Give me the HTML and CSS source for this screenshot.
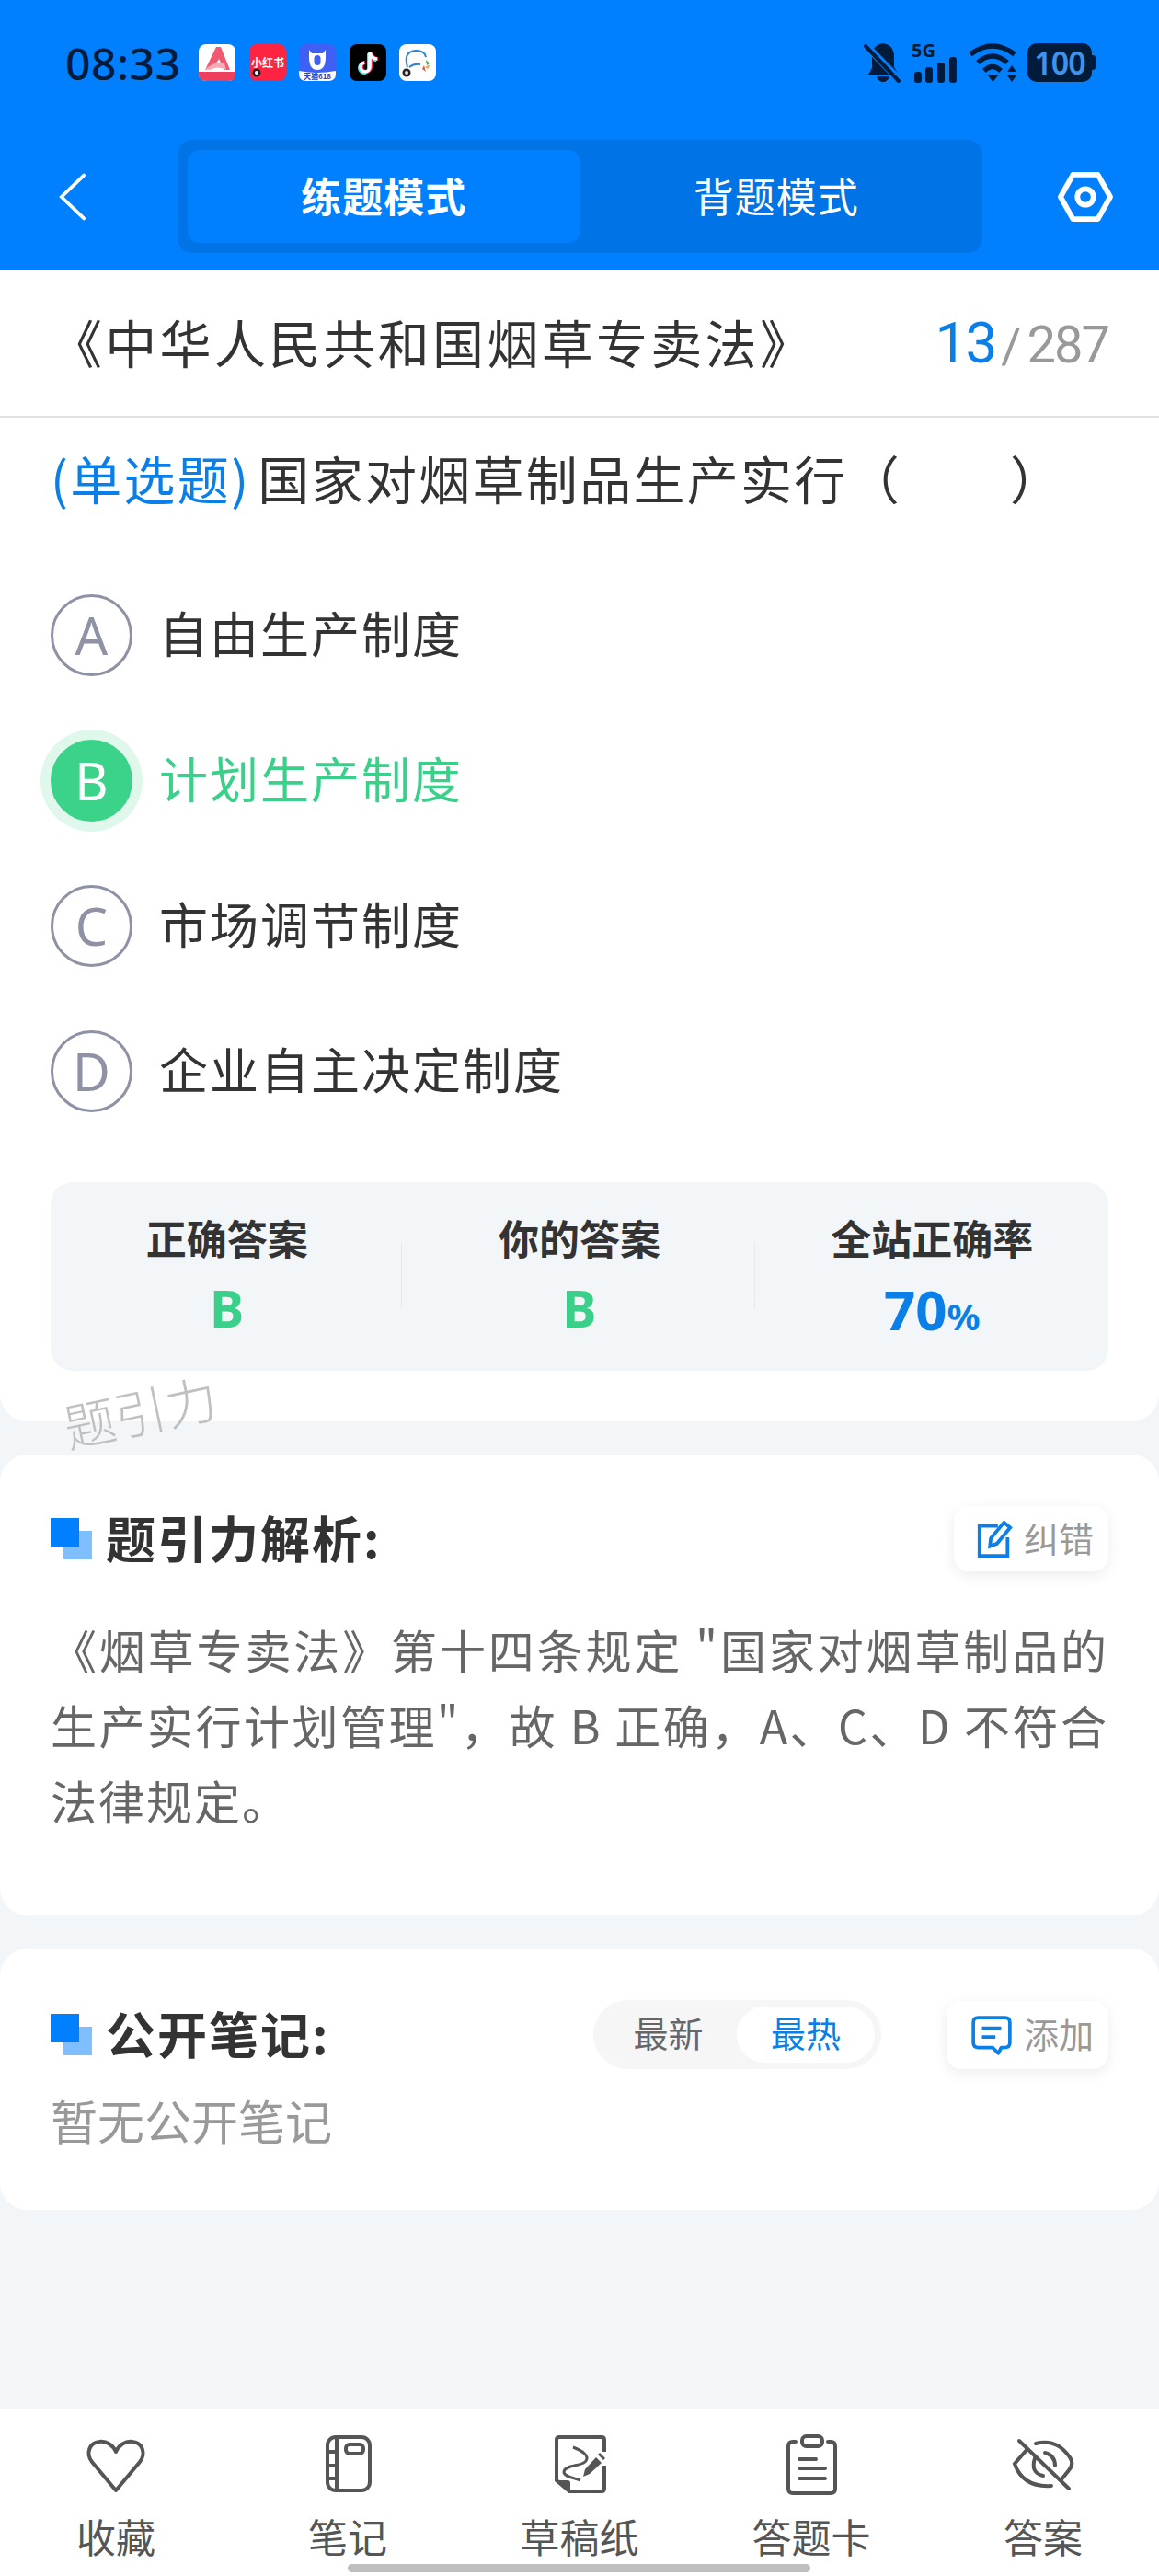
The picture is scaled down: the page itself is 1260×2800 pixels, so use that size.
FILE: index.html

```html
<!DOCTYPE html>
<html lang="zh-CN">
<head>
<meta charset="UTF-8">
<meta name="viewport" content="width=device-width, initial-scale=1.0">
<title>练题模式</title>
<link rel="stylesheet" href="styles.css">
</head>
<body>

<div class="page">

  <div class="header">
    <div class="status-bar">
      <span class="time">08:33</span>
      <div class="app-icons">
        <svg class="app" viewBox="0 0 40 40"><rect width="40" height="40" rx="8" fill="#fff"/><path d="M0 30H40V32Q40 40 32 40H8Q0 40 0 32Z" fill="#ee3f5c"/><path d="M7 28 19 3 24 3 34 28 28 28 22 16 17 24Q12 25 7 28Z" fill="#f0596f"/><path d="M7 28Q16 18 28 21L30 28Q20 23 12 28Z" fill="#f9a9b4"/></svg>
        <svg class="app" viewBox="0 0 40 40"><rect width="40" height="40" rx="8" fill="#ff2442"/><text x="20" y="25" class="app-text" fill="#fff" font-size="12">小红书</text><circle cx="8" cy="31" r="4.5" fill="#222"/><circle cx="8" cy="31" r="2" fill="#fff"/></svg>
        <svg class="app" viewBox="0 0 40 40"><rect width="40" height="40" rx="8" fill="#3f5ff5"/><path d="M0 29Q20 33 40 29V32Q40 40 32 40H8Q0 40 0 32Z" fill="#fff"/><path d="M11 6 14 10H26L29 6V14Q29 28 20 28Q11 28 11 14Z" fill="#fff"/><rect x="16.500" y="12" width="7" height="11" rx="3.500" fill="#3f5ff5"/><text x="20" y="38" class="app-text" fill="#2346c8" font-size="8">天猫618</text></svg>
        <svg class="app" viewBox="0 0 40 40"><rect width="40" height="40" rx="8" fill="#000"/><path d="M22 9V25A5 5 0 1 1 16 20M22 9Q24 16 30 16" fill="none" stroke="#25f4ee" stroke-width="4" transform="translate(-1 1)"/><path d="M22 9V25A5 5 0 1 1 16 20M22 9Q24 16 30 16" fill="none" stroke="#fe2c55" stroke-width="4" transform="translate(1 0)"/><path d="M22 9V25A5 5 0 1 1 16 20M22 9Q24 16 30 16" fill="none" stroke="#fff" stroke-width="3.500"/></svg>
        <svg class="app" viewBox="0 0 40 40"><rect width="40" height="40" rx="8" fill="#fff"/><path d="M9 25Q4 8 18 7Q28 7 29 14M11 25Q16 21 23 22" fill="none" stroke="#2f7fd8" stroke-width="2"/><circle cx="8" cy="31" r="4.500" fill="#222"/><circle cx="8" cy="31" r="2" fill="#ddd"/><path d="M29 17 33 21 30 23Z" fill="#3aa655"/><path d="M34 22 31 27 28 25Z" fill="#f2a33a"/><path d="M27 23 25 27 29 30Z" fill="#e8574a"/></svg>
      </div>
      <div class="status-right">
        <svg class="st-bell" viewBox="0 0 42 44"><path d="M21 1Q31 2 33 13V27L38 35H5L9 28V13Q11 2 21 1Z" fill="#001c3a"/><path d="M14 37H28Q26 43 21 43Q16 43 14 37Z" fill="#001c3a"/><path d="M3 4 39 41" stroke="#0080ff" stroke-width="8"/><path d="M2 4 38 42" stroke="#001c3a" stroke-width="4" stroke-linecap="round"/></svg>
        <div class="st-signal">
          <span class="st-5g">5G</span>
          <svg class="st-bars" viewBox="0 0 50 28"><rect x="3" y="16" width="8" height="12" rx="3" fill="#001c3a"/><rect x="15" y="11" width="8" height="17" rx="3" fill="#001c3a"/><rect x="28" y="6" width="8" height="22" rx="3" fill="#001c3a"/><rect x="41" y="0" width="8" height="28" rx="3" fill="#001c3a"/></svg>
        </div>
        <svg class="st-wifi" viewBox="0 0 54 44"><g fill="none" stroke="#001c3a" stroke-width="5.500"><path d="M2 13Q26 -5 50 13"/><path d="M10 22Q26 8 42 22"/><path d="M17 31Q26 22 35 31"/></g><path d="M21 36H32L26.500 43Z" fill="#001c3a"/><path d="M47 25 52 32H42Z" fill="#001c3a"/><path d="M47 43 52 36H42Z" fill="#001c3a"/></svg>
        <div class="battery"><span class="battery-num">100</span></div>
      </div>
    </div>
    <div class="nav">
      <svg class="nav-back" viewBox="0 0 32 56"><path d="M29 3 3 28 29 53" fill="none" stroke="#fff" stroke-width="4" stroke-linecap="round"/></svg>
      <div class="mode-switch">
        <div class="mode active">练题模式</div>
        <div class="mode">背题模式</div>
      </div>
      <svg class="nav-gear" viewBox="0 0 64 58"><path d="M18 4H46L60 29 46 54H18L4 29Z" fill="none" stroke="#fff" stroke-width="6" stroke-linejoin="round"/><circle cx="32" cy="29" r="9" fill="none" stroke="#fff" stroke-width="6"/></svg>
    </div>
  </div>

  <div class="card question-card">
    <div class="title-row">
      <div class="law-title">《中华人民共和国烟草专卖法》</div>
      <div class="counter"><span class="counter-now">13</span><span class="counter-sep">/</span><span class="counter-total">287</span></div>
    </div>
    <div class="question"><span class="q-type">(单选题)</span><span class="q-text">国家对烟草制品生产实行（<span class="q-blank"></span>）</span></div>
    <div class="options">
      <div class="option"><div class="letter">A</div><div class="opt-text">自由生产制度</div></div>
      <div class="option selected"><div class="letter">B</div><div class="opt-text">计划生产制度</div></div>
      <div class="option"><div class="letter">C</div><div class="opt-text">市场调节制度</div></div>
      <div class="option"><div class="letter">D</div><div class="opt-text">企业自主决定制度</div></div>
    </div>
    <div class="stats">
      <div class="stat"><div class="stat-label">正确答案</div><div class="stat-value green">B</div></div>
      <div class="stat"><div class="stat-label">你的答案</div><div class="stat-value green">B</div></div>
      <div class="stat"><div class="stat-label">全站正确率</div><div class="stat-value blue">70<span class="percent">%</span></div></div>
    </div>
    <div class="watermark">题引力</div>
  </div>

  <div class="card analysis-card">
    <div class="section-head">
      <div class="section-title"><span class="squares"></span><span class="section-name">题引力解析:</span></div>
      <div class="small-btn">
        <svg class="btn-icon" viewBox="0 0 40 44"><path d="M24 7H3V41H35V20" fill="none" stroke="#0a7fe8" stroke-width="4"/><path d="M15 30 16 21 31 3 38 9 23 27Z" fill="none" stroke="#0a7fe8" stroke-width="4"/></svg>
        <span class="btn-text">纠错</span>
      </div>
    </div>
    <p class="analysis-text">《烟草专卖法》第十四条规定 "国家对烟草制品的生产实行计划管理"，故 B 正确，A、C、D 不符合法律规定。</p>
  </div>

  <div class="card notes-card">
    <div class="section-head">
      <div class="section-title"><span class="squares"></span><span class="section-name">公开笔记:</span></div>
      <div class="notes-tools">
        <div class="sort-pill">
          <div class="sort-item">最新</div>
          <div class="sort-item on">最热</div>
        </div>
        <div class="small-btn">
          <svg class="btn-icon" viewBox="0 0 44 42"><path d="M8 3H36Q41 3 41 8V29Q41 34 36 34H32L29 40 23 34H8Q3 34 3 29V8Q3 3 8 3Z" fill="none" stroke="#0a7fe8" stroke-width="3.500" stroke-linejoin="round"/><path d="M12 14H32M12 23H26" stroke="#0a7fe8" stroke-width="3.500"/></svg>
          <span class="btn-text">添加</span>
        </div>
      </div>
    </div>
    <div class="no-notes">暂无公开笔记</div>
  </div>

  <div class="tabbar">
    <div class="tab">
      <svg class="tab-icon" viewBox="0 0 70 70"><path d="M35 62 9 31C2 22 6 10 17 9 25 8 32 13 35 20 38 13 45 8 53 9 64 10 68 22 61 31Z" fill="none" stroke="#555" stroke-width="4" stroke-linejoin="round"/></svg>
      <div class="tab-label">收藏</div>
    </div>
    <div class="tab">
      <svg class="tab-icon" viewBox="0 0 70 70"><g fill="none" stroke="#555" stroke-width="4"><rect x="13" y="4" width="46" height="58" rx="9"/><path d="M23 4V62M13 20H23M13 35H23M13 49H23"/><rect x="33" y="12" width="19" height="10" rx="4"/></g></svg>
      <div class="tab-label">笔记</div>
    </div>
    <div class="tab">
      <svg class="tab-icon" viewBox="0 0 70 70"><path d="M62 20V7Q62 4 59 4H13Q10 4 10 7V51L24 63H59Q62 63 62 60V35" fill="none" stroke="#555" stroke-width="4"/><path d="M10 51H22Q25 51 25 54V64Z" fill="#555"/><path d="M28 15C38 19 46 24 42 30 38 36 18 34 18 42 18 47 28 48 36 51" fill="none" stroke="#555" stroke-width="3"/><path d="M53 26 59 32 46 44 39 47 41 39Z" fill="#555"/><path d="M56 22 62 28" stroke="#555" stroke-width="3"/></svg>
      <div class="tab-label">草稿纸</div>
    </div>
    <div class="tab">
      <svg class="tab-icon" viewBox="0 0 70 70"><g fill="none" stroke="#555" stroke-width="4" stroke-linecap="round"><path d="M18 9H15Q10 9 10 14V60Q10 65 15 65H56Q61 65 61 60V14Q61 9 56 9H53"/><rect x="25" y="3" width="22" height="11" rx="4.500"/><path d="M22 28H40M22 38H50M22 49H50"/></g></svg>
      <div class="tab-label">答题卡</div>
    </div>
    <div class="tab">
      <svg class="tab-icon" viewBox="0 0 70 70"><g fill="none" stroke="#555" stroke-width="4" stroke-linecap="round"><path d="M9 8 63 60"/><path d="M27 11Q50 5 64 26 69 33 63 40L55 50"/><path d="M17 18 4 33Q13 59 44 57"/><path d="M37 21Q48 24 48 35"/><path d="M26 27Q21 43 35 46"/></g></svg>
      <div class="tab-label">答案</div>
    </div>
    <div class="home-bar"></div>
  </div>

</div>

</body>
</html>
```

FILE: styles.css

```css
* {
    box-sizing: border-box;
}

body {
    margin: 0;
    font-family: "Noto Sans CJK SC", "Noto Sans", sans-serif;
    color: #333;
}

.page {
    width: 1260px;
    height: 2800px;
    background-color: #f2f6f9;
    display: flex;
    flex-direction: column;
    overflow: hidden;
}

/* top */

.header {
    height: 294px;
    background-color: #0080ff;
    padding: 47px 73px 0 64px;
}

.status-bar {
    display: flex;
    align-items: center;
    height: 42px;
}

.time {
    font-family: "Noto Sans", sans-serif;
    font-size: 48px;
    font-weight: 500;
    letter-spacing: 0.5px;
    color: #001c3a;
    width: 152px;
    padding-left: 7px;
}

.app-icons {
    display: flex;
    gap: 14.5px;
}

.app {
    width: 40px;
    height: 40px;
}

.app-text {
    font-family: "Noto Sans CJK SC", sans-serif;
    font-weight: 700;
    text-anchor: middle;
}

.status-right {
    margin-left: auto;
    display: flex;
    align-items: center;
}

.st-bell {
    width: 42px;
    height: 44px;
    margin-right: 10px;
}

.st-signal {
    width: 50px;
    height: 44px;
    margin-right: 12px;
    display: flex;
    flex-direction: column;
}

.st-5g {
    font-family: "Noto Sans", sans-serif;
    font-size: 20px;
    font-weight: 700;
    line-height: 18px;
    height: 16px;
    color: #001c3a;
}

.st-bars {
    width: 50px;
    height: 28px;
}

.st-wifi {
    width: 54px;
    height: 44px;
    margin-right: 10px;
}

.battery {
    position: relative;
    width: 70px;
    height: 42px;
    border-radius: 10px;
    background-color: #001c3a;
    display: flex;
    align-items: center;
    justify-content: center;
}

.battery::after {
    content: "";
    position: absolute;
    right: -4px;
    top: 13px;
    width: 4px;
    height: 16px;
    border-radius: 0 3px 3px 0;
    background-color: #001c3a;
}

.battery-num {
    font-family: "Noto Sans", sans-serif;
    font-size: 34px;
    font-weight: 600;
    line-height: 42px;
    letter-spacing: -1px;
    color: #3d94ea;
}

.nav {
    display: flex;
    align-items: center;
    margin-top: 63px;
    height: 123px;
}

.nav-back {
    width: 30px;
    height: 54px;
}

.mode-switch {
    width: 875px;
    height: 123px;
    margin-left: 99px;
    padding: 11px;
    border-radius: 16px;
    background-color: #0074e6;
    display: flex;
}

.mode {
    flex: 1;
    border-radius: 14px;
    padding-bottom: 3px;
    display: flex;
    align-items: center;
    justify-content: center;
    font-size: 44px;
    letter-spacing: 1px;
    color: #fff;
}

.mode.active {
    background-color: #0080ff;
    font-weight: 700;
}

.nav-gear {
    width: 62px;
    height: 56px;
    margin-left: auto;
    margin-right: -24px;
}

/* cards */

.card {
    background-color: #fff;
    border-radius: 30px;
}

.question-card {
    position: relative;
    height: 1251px;
    border-radius: 0 0 30px 30px;
}

.title-row {
    height: 160px;
    border-bottom: 2px solid #e2e2e2;
    padding: 0 55px 0 55px;
    display: flex;
    align-items: center;
    justify-content: space-between;
}

.law-title {
    font-size: 56px;
    font-weight: 400;
    letter-spacing: 3.3px;
    line-height: 70px;
    padding-bottom: 5px;
}

.counter {
    font-family: "Roboto", sans-serif;
    display: flex;
    align-items: baseline;
    padding-bottom: 2px;
}

.counter-now {
    font-size: 62px;
    color: #0a7fe8;
    letter-spacing: -2px;
}

.counter-sep {
    font-size: 54px;
    color: #999;
    margin: 0 6px;
}

.counter-total {
    font-size: 56px;
    letter-spacing: -2px;
    color: #999;
}

.question {
    height: 134px;
    padding: 0 0 5px 55px;
    margin-bottom: 23px;
    display: flex;
    align-items: center;
    font-size: 56px;
    letter-spacing: 2.3px;
}

.q-type {
    color: #0a7fe8;
    margin-right: 8px;
}

.q-blank {
    display: inline-block;
    width: 118px;
}

.option {
    height: 158px;
    padding-left: 55px;
    display: flex;
    align-items: center;
}

.letter {
    width: 89px;
    height: 89px;
    border: 3px solid #8e92a4;
    border-radius: 50%;
    display: flex;
    align-items: center;
    justify-content: center;
    font-family: "Noto Sans", sans-serif;
    font-size: 56px;
    font-weight: 400;
    color: #8e92a4;
}

.opt-text {
    margin-left: 29px;
    padding-bottom: 7px;
    font-size: 53px;
    letter-spacing: 2px;
}

.option.selected .letter {
    background-color: #3bd389;
    border-color: #3bd389;
    box-shadow: 0 0 0 11px #e0f7ec;
    color: #fff;
}

.option.selected .opt-text {
    color: #3bd08a;
}

.stats {
    margin: 42px 55px 0;
    height: 205px;
    padding-top: 29px;
    border-radius: 24px;
    background-color: #f2f6f9;
    display: flex;
    align-items: flex-start;
}

.stat {
    flex: 1;
    text-align: center;
    position: relative;
}

.stat + .stat::before {
    content: "";
    position: absolute;
    left: -2px;
    top: 36px;
    height: 73px;
    width: 1px;
    background-color: #e6eaee;
}

.stat-label {
    font-size: 44px;
    font-weight: 700;
    line-height: 62px;
}

.stat-value {
    font-family: "Noto Sans", sans-serif;
    font-size: 56px;
    font-weight: 700;
    line-height: 78px;
    margin-top: 6px;
}

.stat-value.blue {
    font-size: 60px;
    margin-top: 8px;
}

.green {
    color: #3bd08a;
}

.blue {
    color: #0a7fe8;
}

.percent {
    font-size: 40px;
}

.watermark {
    position: absolute;
    left: 68px;
    top: 1204px;
    font-size: 56px;
    font-weight: 300;
    line-height: 70px;
    color: #c0c0c0;
    transform: rotate(-12deg);
}

.analysis-card {
    margin-top: 36px;
    height: 501px;
    padding: 56px 55px 0;
}

.notes-card {
    margin-top: 36px;
    height: 284px;
    padding: 56px 55px 0;
}

.section-head {
    height: 71px;
    display: flex;
    align-items: center;
    justify-content: space-between;
}

.notes-card .section-head {
    margin-top: 2px;
}

.section-title {
    display: flex;
    align-items: center;
    font-size: 54px;
    font-weight: 700;
    letter-spacing: 2px;
}

.section-name {
    margin-top: -4px;
}

.squares {
    position: relative;
    width: 45px;
    height: 45px;
    margin-right: 15px;
}

.squares::before {
    content: "";
    position: absolute;
    right: 0;
    bottom: 0;
    width: 31px;
    height: 31px;
    background-color: #80bfff;
}

.squares::after {
    content: "";
    position: absolute;
    left: 0;
    top: 0;
    width: 31px;
    height: 31px;
    background-color: #0080ff;
}

.small-btn {
    height: 71px;
    padding: 0 16px 0 24px;
    border-radius: 16px;
    background-color: #fff;
    box-shadow: 0 4px 16px rgba(0, 0, 0, 0.08);
    display: flex;
    align-items: center;
    gap: 12px;
    font-size: 38px;
    color: #999;
}

.btn-text {
    padding-bottom: 5px;
}

.btn-icon {
    width: 40px;
    height: 42px;
}

.notes-tools .small-btn {
    height: 74px;
    padding-left: 26px;
}

.notes-tools .btn-icon {
    width: 46px;
    height: 44px;
}

.analysis-text {
    margin: 43px 0 0;
    font-size: 50px;
    line-height: 82px;
    letter-spacing: 2px;
    color: #666;
    text-align: justify;
}

.notes-tools {
    display: flex;
    align-items: center;
    gap: 71px;
}

.sort-pill {
    width: 313px;
    height: 75px;
    padding: 7px;
    border-radius: 38px;
    background-color: #f6f6f6;
    display: flex;
    align-items: center;
}

.sort-item {
    flex: 1;
    height: 61px;
    padding-bottom: 6px;
    border-radius: 31px;
    display: flex;
    align-items: center;
    justify-content: center;
    font-size: 38px;
    color: #666;
}

.sort-item.on {
    flex: none;
    width: 150px;
    background-color: #fff;
    color: #0a7fe8;
}

.no-notes {
    margin-top: 27px;
    font-size: 51px;
    line-height: 60px;
    color: #999;
}

/* bottom */

.tabbar {
    position: relative;
    margin-top: auto;
    height: 182px;
    background-color: #fff;
    padding-top: 27px;
    display: flex;
}

.tab {
    flex: 1;
    display: flex;
    flex-direction: column;
    align-items: center;
}

.tab-icon {
    width: 70px;
    height: 70px;
}

.tab-label {
    margin-top: 16px;
    font-size: 43px;
    line-height: 50px;
    color: #555;
}

.home-bar {
    position: absolute;
    left: 378px;
    bottom: 4px;
    width: 503px;
    height: 9px;
    border-radius: 5px;
    background-color: #bfbfbf;
}
```
